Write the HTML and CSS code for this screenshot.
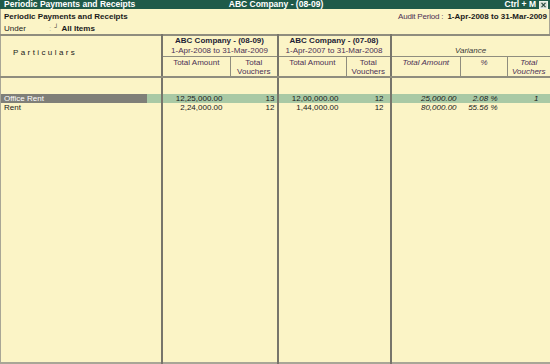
FILE: index.html
```html
<!DOCTYPE html>
<html lang="en">
<head>
    <meta charset="UTF-8">
    <title>Periodic Payments and Receipts</title>
    <link rel="stylesheet" href="styles.css">
</head>
<body>
    <div class="titlebar">
        <span class="tb-left">Periodic Payments and Receipts</span>
        <span class="tb-center">ABC Company - (08-09)</span>
        <span class="tb-right">Ctrl + M
            <svg class="close-box" width="9" height="8" viewBox="0 0 9 8">
                <rect x="0.5" y="0.5" width="8" height="7" fill="#d9dfd6" stroke="#eef2ea"/>
                <path d="M2.5 1.8 L6.5 6.2 M6.5 1.8 L2.5 6.2" stroke="#2a4a40" stroke-width="1.2"/>
            </svg>
        </span>
    </div>

    <div class="report-head">
        <div class="rh-left">
            <div class="rh-title">Periodic Payments and Receipts</div>
            <div class="rh-under">Under <span class="colon">:</span><span class="mark">┘</span><b>All Items</b></div>
        </div>
        <div class="rh-period">Audit Period :&nbsp; <b>1-Apr-2008 to 31-Mar-2009</b></div>
    </div>

    <table class="report">
        <colgroup>
            <col style="width:161px">
            <col style="width:69px">
            <col style="width:47px">
            <col style="width:69px">
            <col style="width:44px">
            <col style="width:70px">
            <col style="width:47px">
            <col style="width:43px">
        </colgroup>
        <tr class="head1">
            <td class="part-head" rowspan="2">Particulars</td>
            <th class="major" colspan="2"><b>ABC Company - (08-09)</b><br><span class="period">1-Apr-2008 to 31-Mar-2009</span></th>
            <th class="major" colspan="2"><b>ABC Company - (07-08)</b><br><span class="period">1-Apr-2007 to 31-Mar-2008</span></th>
            <th class="major variance" colspan="3">Variance</th>
        </tr>
        <tr class="head2">
            <th class="major">Total Amount</th>
            <th>Total<br>Vouchers</th>
            <th class="major">Total Amount</th>
            <th>Total<br>Vouchers</th>
            <th class="major it">Total Amount</th>
            <th class="it">%</th>
            <th class="it">Total<br>Vouchers</th>
        </tr>
        <tr class="gap">
            <td></td><td class="major" colspan="2"></td><td class="major" colspan="2"></td><td class="major" colspan="3"></td>
        </tr>
        <tr class="row selected">
            <td class="name"><span class="sel-name">Office Rent</span></td>
            <td class="major num amt">12,25,000.00</td>
            <td class="num vch">13</td>
            <td class="major num amt">12,00,000.00</td>
            <td class="num vch2">12</td>
            <td class="major num it vamt">25,000.00</td>
            <td class="num it pct">2.08 %</td>
            <td class="num it vvch">1</td>
        </tr>
        <tr class="row">
            <td class="name">Rent</td>
            <td class="major num amt">2,24,000.00</td>
            <td class="num vch">12</td>
            <td class="major num amt">1,44,000.00</td>
            <td class="num vch2">12</td>
            <td class="major num it vamt">80,000.00</td>
            <td class="num it pct">55.56 %</td>
            <td class="num it vvch"></td>
        </tr>
        <tr class="fill">
            <td></td><td class="major" colspan="2"></td><td class="major" colspan="2"></td><td class="major" colspan="3"></td>
        </tr>
    </table>
</body>
</html>
```

FILE: styles.css
```css
body {
    margin: 0;
    width: 550px;
    height: 364px;
    overflow: hidden;
    background-color: #fbf4c6;
    font-family: 'Liberation Sans', Arial, sans-serif;
    font-size: 8px;
    color: #1a1a1a;
}

.titlebar {
    display: grid;
    grid-template-columns: 1fr auto 1fr;
    align-items: center;
    height: 9px;
    padding: 0 2px 0 4px;
    background-color: #1f5a49;
    color: #ffffff;
    font-weight: bold;
    font-size: 8.5px;
    line-height: 9px;
}
.titlebar .tb-right {
    display: flex;
    justify-content: flex-end;
    align-items: center;
    gap: 3px;
}
.close-box {
    display: block;
}

.report-head {
    display: flex;
    justify-content: space-between;
    height: 25px;
    padding: 3px 2px 0 3px;
    box-sizing: border-box;
    border-left: 1px solid #a8a696;
    border-right: 1px solid #a8a696;
    line-height: 10px;
}
.rh-title {
    font-weight: bold;
}
.rh-under .colon {
    margin-left: 21px;
    color: #b9b49a;
}
.rh-under .mark {
    display: inline-block;
    margin: 0 3px 0 3px;
    font-size: 6px;
    font-weight: bold;
    vertical-align: 2px;
}
.rh-period {
    color: #4b3055;
    letter-spacing: -0.2px;
}
.rh-period b {
    color: #1a1a1a;
    letter-spacing: 0;
}

.report {
    width: 550px;
    table-layout: fixed;
    border-collapse: collapse;
    border-top: 2px solid #8f8d7e;
    border-left: 1px solid #a8a696;
    border-right: 2px solid #a8a696;
    border-bottom: 2px solid #a8a696;
}
.report td,
.report th {
    padding: 0;
    font-weight: normal;
    white-space: nowrap;
    overflow: hidden;
}
.report .major {
    border-left: 2px solid #77756b;
}

.head1 {
    height: 21px;
}
.head1 th {
    vertical-align: bottom;
    border-bottom: 1px solid #8f8d7e;
    line-height: 10px;
    padding-bottom: 0;
}
.head1 th b {
    color: #1d1d35;
}
.period,
.head2 th {
    color: #4b3055;
}
.head1 .variance {
    font-style: italic;
    color: #3a3a3a;
}
.part-head {
    padding: 12px 0 0 12px !important;
    font-weight: bold;
    letter-spacing: 2.4px;
    vertical-align: top;
    border-bottom: 2px solid #8f8d7e;
}
.head2 {
    height: 19px;
}
.head2 th {
    vertical-align: top;
    line-height: 9px;
    padding-top: 1px;
    border-bottom: 2px solid #8f8d7e;
    border-left: 1px solid #8f8d7e;
}
.head2 th.major {
    border-left: 2px solid #77756b;
}
.head2 th.it {
    font-style: italic;
}

.gap {
    height: 17px;
}
.row {
    height: 9px;
    line-height: 9px;
}
.row .name {
    padding-left: 3px;
}
.row.selected td {
    background-color: #a9c9a5;
}
.row.selected .name {
    padding-left: 0;
}
.sel-name {
    display: block;
    width: 143px;
    padding-left: 3px;
    background-color: #7f7f78;
    color: #ffffff;
}
.num {
    text-align: right;
}
.it {
    font-style: italic;
}
.amt {
    padding-right: 8px !important;
}
.vch {
    padding-right: 2px !important;
}
.vch2 {
    padding-right: 6px !important;
}
.vamt {
    padding-right: 4px !important;
}
.pct {
    padding-right: 10px !important;
}
.vvch {
    padding-right: 11px !important;
}
.fill {
    height: 251px;
}
```
